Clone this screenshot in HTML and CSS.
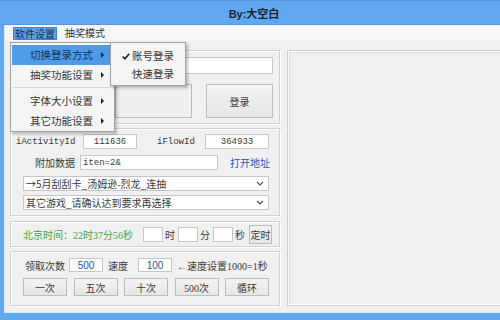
FILE: index.html
```html
<!DOCTYPE html>
<html>
<head>
  <meta charset="utf-8">
  <title>By:大空白</title>
  <link rel="stylesheet" href="styles.css">
</head>
<body>
  <div class="window">
    <div class="titlebar">By:大空白</div>
    <div class="frame">
      <div class="menubar">
        <span class="menubar-item open">软件设置</span>
        <span class="menubar-item">抽奖模式</span>
      </div>
      <div class="client">
        <div class="left-col">
          <div class="group login">
            <input class="field account" type="text">
            <div class="login-row">
              <button class="btn captcha"></button>
              <button class="btn login-btn">登录</button>
            </div>
          </div>
          <div class="group ids">
            <div class="row">
              <span class="mono-label">iActivityId</span>
              <input class="field mono id-a" value="111636">
              <span class="mono-label flow">iFlowId</span>
              <input class="field mono id-b" value="364933">
            </div>
            <div class="row extra">
              <span class="label">附加数据</span>
              <input class="field mono extra-data" value="iten=2&amp;">
              <a class="open-link" href="#">打开地址</a>
            </div>
            <div class="combo first">
              <span>→5月刮刮卡_汤姆逊-烈龙_连抽</span>
              <svg width="8" height="5" viewBox="0 0 8 5"><path d="M1 1l3 3 3-3" fill="none" stroke="#555" stroke-width="1.2"/></svg>
            </div>
            <div class="combo">
              <span>其它游戏_请确认达到要求再选择</span>
              <svg width="8" height="5" viewBox="0 0 8 5"><path d="M1 1l3 3 3-3" fill="none" stroke="#555" stroke-width="1.2"/></svg>
            </div>
          </div>
          <div class="group timer">
            <span class="clock">北京时间：22时37分56秒</span>
            <input class="field time-box first" type="text">
            <span class="unit">时</span>
            <input class="field time-box" type="text">
            <span class="unit">分</span>
            <input class="field time-box" type="text">
            <span class="unit">秒</span>
            <button class="btn timer-btn">定时</button>
          </div>
          <div class="group draw">
            <div class="row">
              <span class="label">领取次数</span>
              <input class="field num count" value="500">
              <span class="label speed">速度</span>
              <input class="field num speed-box" value="100">
              <span class="hint">←速度设置1000=1秒</span>
            </div>
            <div class="draw-buttons">
              <button class="btn">一次</button>
              <button class="btn">五次</button>
              <button class="btn">十次</button>
              <button class="btn">500次</button>
              <button class="btn">循环</button>
            </div>
          </div>
        </div>
        <div class="log-panel"></div>
      </div>
    </div>

    <div class="dropdown">
      <div class="menu-entry active">切换登录方式<i class="arrow"></i></div>
      <div class="menu-entry">抽奖功能设置<i class="arrow"></i></div>
      <div class="menu-sep"></div>
      <div class="menu-entry">字体大小设置<i class="arrow"></i></div>
      <div class="menu-entry">其它功能设置<i class="arrow"></i></div>
    </div>
    <div class="submenu">
      <div class="menu-entry checked">
        <svg class="check" width="8" height="7" viewBox="0 0 8 7"><path d="M0.8 3.6l2.2 2.2 4.2-5" fill="none" stroke="#222" stroke-width="1.6"/></svg>账号登录
      </div>
      <div class="menu-entry">快速登录</div>
    </div>
  </div>
</body>
</html>
```

FILE: styles.css
```css
html {
  font-size: 10px;
  box-sizing: border-box;
}
*, *:before, *:after {
  box-sizing: inherit;
}
body {
  margin: 0;
  padding: 0;
  width: 500px;
  height: 320px;
  overflow: hidden;
  font-family: "Liberation Serif", "Noto Sans CJK SC", serif;
  font-size: 10px;
  color: #3a3a3a;
}
.window {
  position: relative;
  height: 320px;
  background: #62a8f0;
  padding: 0 0 7px 4px;
  display: flex;
  flex-direction: column;
}
.titlebar {
  height: 25px;
  margin-left: -4px;
  padding-left: 8px;
  border-top: 1px solid #5097e4;
  border-bottom: 1px solid #5598e2;
  display: flex;
  align-items: center;
  justify-content: center;
  font-family: "Liberation Sans", "Noto Sans CJK SC", sans-serif;
  font-size: 11px;
  font-weight: bold;
  color: #1a2233;
}
.frame {
  flex: 1;
  min-height: 0;
  display: flex;
  flex-direction: column;
  background: #f0f0f0;
  border-left: 1px solid #d9e6f5;
  border-bottom: 1px solid #d9e6f5;
}
.menubar {
  height: 16px;
  background: #f5f6f7;
  display: flex;
  align-items: center;
  padding-left: 8px;
}
.menubar-item {
  height: 13px;
  line-height: 12px;
  padding: 0 2px;
  font-family: "Noto Sans CJK SC", sans-serif;
  color: #333;
}
.menubar-item + .menubar-item {
  margin-left: 6px;
}
.menubar-item.open {
  padding: 0 1px;
  background: #5c9fe6;
  border: 1px solid #3f84d0;
  color: #14304f;
}
.client {
  flex: 1;
  min-height: 0;
  display: flex;
  gap: 7px;
  padding: 9px 0 6px 5px;
  overflow: hidden;
}
.left-col {
  flex: none;
  width: 270px;
  display: flex;
  flex-direction: column;
}
.log-panel {
  flex: none;
  width: 222px;
  border: 1px solid #cdcdcd;
  box-shadow: inset 1px 1px 0 #fff, inset -1px -1px 0 #fff, inset 2px 2px 0 #dcdcdc;
  background: #f0f0f0;
}
.group {
  border: 1px solid #d0d0d0;
  box-shadow: inset 1px 1px 0 #fff, 1px 1px 0 #fff;
}
.field {
  margin: 0;
  padding: 0 2px;
  border: 1px solid #c4c6cc;
  background: #fff;
  font-family: "Liberation Sans", "Noto Sans CJK SC", sans-serif;
  font-size: 10px;
  color: #3a3a3a;
  outline: none;
}
.mono {
  font-family: "Liberation Mono", monospace;
  font-size: 9px;
}
.btn {
  margin: 0;
  padding: 0;
  border: 1px solid #bcbcbc;
  background: linear-gradient(#f3f3f3, #e6e6e6);
  font-family: "Liberation Serif", "Noto Sans CJK SC", serif;
  font-size: 10px;
  color: #3a3a3a;
}
.row {
  display: flex;
  align-items: center;
}
.label {
  font-family: "Noto Sans CJK SC", sans-serif;
}

/* login */
.login {
  height: 74px;
  display: flex;
  flex-direction: column;
  align-items: flex-end;
  padding: 6px 6px 0 0;
}
.account {
  width: 155px;
  height: 17px;
}
.login-row {
  margin-top: 10px;
  display: flex;
  gap: 14px;
}
.captcha {
  width: 77px;
  height: 34px;
  background: #efefef;
}
.login-btn {
  width: 67px;
  height: 34px;
  font-family: "Noto Sans CJK SC", sans-serif;
}

/* ids */
.ids {
  height: 88px;
  margin-top: 4px;
  padding-top: 5px;
}
.ids .row {
  height: 15px;
  padding-left: 5px;
}
.mono-label {
  width: 60px;
  font-family: "Liberation Mono", monospace;
  font-size: 9px;
  color: #3a3a3a;
}
.mono-label.flow {
  width: 40px;
  margin-left: 20px;
}
.id-a, .id-b {
  height: 15px;
  text-align: center;
}
.id-a {
  width: 54px;
  margin-left: 7px;
}
.id-b {
  width: 64px;
  margin-left: 8px;
}
.ids .row.extra {
  margin-top: 6px;
}
.extra .label {
  width: 61px;
  padding-right: 2px;
  text-align: right;
}
.extra-data {
  width: 138px;
  height: 15px;
  margin-left: 3px;
}
.open-link {
  margin-left: 12px;
  color: #2457c5;
  text-decoration: none;
  font-family: "Noto Sans CJK SC", sans-serif;
}
.combo {
  width: 246px;
  height: 15px;
  margin: 4px 0 0 12px;
  padding: 0 4px 0 2px;
  display: flex;
  align-items: center;
  justify-content: space-between;
  border: 1px solid #c4c6cc;
  background: #fff;
  font-family: "Noto Sans CJK SC", sans-serif;
}
.combo.first {
  margin-top: 6px;
}

/* timer */
.timer {
  height: 26px;
  margin-top: 5px;
  padding-left: 12px;
  display: flex;
  align-items: center;
}
.clock {
  width: 110px;
  color: #45a045;
  white-space: nowrap;
}
.time-box {
  width: 20px;
  height: 15px;
  margin-left: 1px;
}
.time-box.first {
  margin-left: 10px;
}
.unit {
  width: 12px;
  margin-left: 2px;
  font-family: "Noto Sans CJK SC", sans-serif;
}
.timer-btn {
  width: 23px;
  height: 19px;
  margin-left: 2px;
  font-family: "Noto Sans CJK SC", sans-serif;
}

/* draw */
.draw {
  height: 55px;
  margin-top: 4px;
  padding-top: 6px;
}
.draw .row {
  height: 14px;
  padding-left: 14px;
}
.num {
  width: 34px;
  height: 14px;
  text-align: center;
  color: #3050a8;
}
.count {
  margin-left: 4px;
}
.speed {
  margin-left: 5px;
}
.speed-box {
  margin-left: 10px;
}
.hint {
  margin-left: 5px;
  white-space: nowrap;
}
.draw-buttons {
  width: 246px;
  margin: 6px 0 0 12px;
  display: flex;
  justify-content: space-between;
}
.draw-buttons .btn {
  width: 44px;
  height: 18px;
}

/* menus */
.dropdown, .submenu {
  position: absolute;
  background: #f4f4f4;
  border: 1px solid #a3a3a3;
  box-shadow: 2px 2px 3px rgba(0, 0, 0, 0.25);
  font-family: "Noto Sans CJK SC", sans-serif;
  font-size: 10.5px;
  color: #333;
}
.dropdown {
  left: 10px;
  top: 42px;
  width: 105px;
  padding: 2px 1px 0;
  z-index: 2;
}
.submenu {
  left: 110px;
  top: 42px;
  width: 76px;
  padding: 4px 1px 2px;
  z-index: 3;
}
.menu-entry {
  position: relative;
  height: 20px;
  line-height: 20px;
  padding-left: 18px;
}
.submenu .menu-entry {
  height: 18px;
  line-height: 18px;
  padding-left: 20px;
}
.menu-entry.active {
  background: #4f9be7;
  color: #14325c;
}
.arrow {
  position: absolute;
  right: 9px;
  top: 7px;
  border-left: 3px solid #222;
  border-top: 3px solid transparent;
  border-bottom: 3px solid transparent;
}
.menu-sep {
  height: 4px;
  margin-top: 2px;
  border-top: 1px solid #d6d6d6;
}
.check {
  position: absolute;
  left: 10px;
  top: 6px;
}
```
